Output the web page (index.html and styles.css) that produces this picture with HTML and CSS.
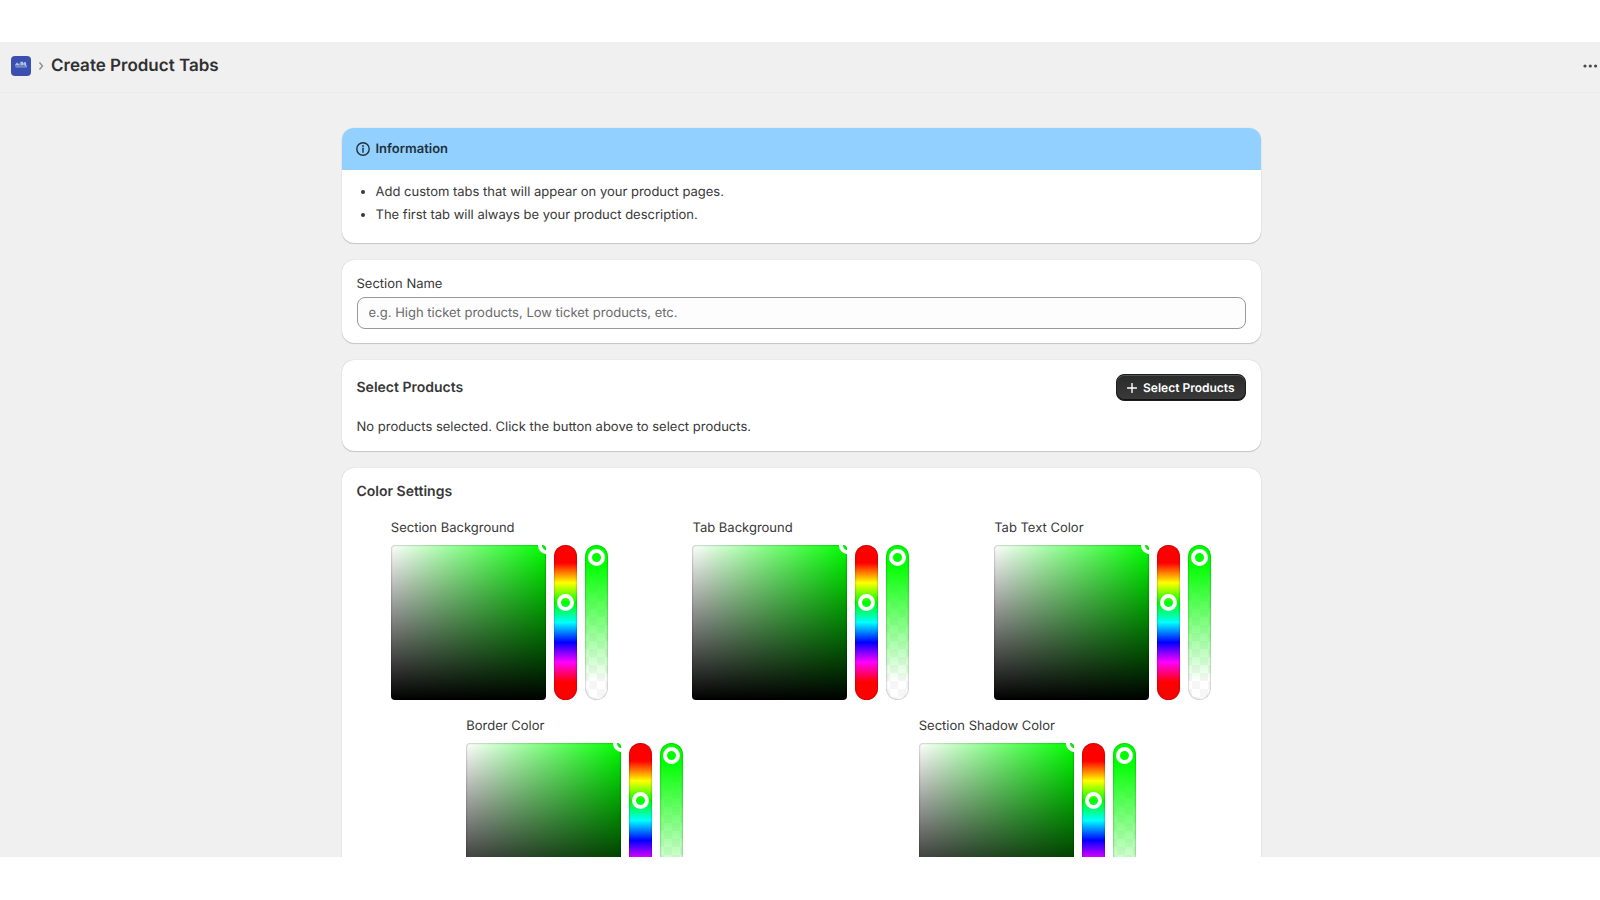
FILE: index.html
```html
<!DOCTYPE html>
<html lang="en">
<head>
<meta charset="utf-8">
<title>Create Product Tabs</title>
<link rel="stylesheet" href="styles.css">
</head>
<body>
<div class="app">
  <header class="topbar">
    <a class="logo" href="#" aria-label="App home">
      <svg viewBox="0 0 20 20" width="20" height="20" aria-hidden="true">
        <rect width="20" height="20" rx="4" fill="#3a50b0"/>
        <path d="M4.500 9.500l1.500-2 1 2M8 9.500v-2M10 9.500v-3h1.500v3M13 7h2M13.500 9.500h2M10 8h5" stroke="#b4c0ea" stroke-width="1.300" fill="none"/>
        <path d="M4.500 10.700h11.500" stroke="#7f9ac8" stroke-width="2" fill="none" opacity=".8"/>
      </svg>
    </a>
    <svg class="crumb" viewBox="0 0 6 10" width="6" height="10" aria-hidden="true"><path d="M1.500 1.500L4.500 5 1.500 8.500" fill="none" stroke="#8f8f8f" stroke-width="1.400"/></svg>
    <h1 class="title">Create Product Tabs</h1>
    <button class="more" type="button" aria-label="More actions">
      <svg viewBox="0 0 16 4" width="16" height="4" aria-hidden="true"><g fill="#4a4a4a"><circle cx="3" cy="2" r="1.600"/><circle cx="8.300" cy="2" r="1.600"/><circle cx="13.600" cy="2" r="1.600"/></g></svg>
    </button>
  </header>
  <main class="page">
    <section class="card banner">
      <div class="banner-head">
        <svg viewBox="0 0 14 14" width="14" height="14" aria-hidden="true"><circle cx="7" cy="7" r="6.200" fill="none" stroke="#22303c" stroke-width="1.400"/><path d="M7 6.300v4" stroke="#22303c" stroke-width="1.400" stroke-linecap="round"/><circle cx="7" cy="4" r=".9" fill="#22303c"/></svg>
        <h2 class="banner-title">Information</h2>
      </div>
      <ul class="tips">
        <li>Add custom tabs that will appear on your product pages.</li>
        <li>The first tab will always be your product description.</li>
      </ul>
    </section>

    <section class="card">
      <div class="field">
        <label for="name">Section Name</label>
        <input class="text" id="name" type="text" placeholder="e.g. High ticket products, Low ticket products, etc.">
      </div>
    </section>

    <section class="card products">
      <div class="row">
        <h2 class="heading">Select Products</h2>
        <button class="primary" type="button">
          <svg viewBox="0 0 10 10" width="10" height="10" aria-hidden="true"><path d="M5 .5v9M.5 5h9" stroke="#fff" stroke-width="1.400" stroke-linecap="round"/></svg>
          Select Products
        </button>
      </div>
      <p class="empty">No products selected. Click the button above to select products.</p>
    </section>

    <section class="card colors">
      <h2 class="heading">Color Settings</h2>
      <div class="pickers">
        <div class="picker" role="group" aria-labelledby="p1">
          <span id="p1">Section Background</span>
          <div class="controls">
            <div class="shade"><button class="dot" type="button" aria-label="Shade"></button></div>
            <input class="slider hue" type="range" min="0" max="360" value="124" aria-label="Hue">
            <input class="slider alpha" type="range" min="0" max="100" value="0" aria-label="Transparency">
          </div>
        </div>
        <div class="picker" role="group" aria-labelledby="p2">
          <span id="p2">Tab Background</span>
          <div class="controls">
            <div class="shade"><button class="dot" type="button" aria-label="Shade"></button></div>
            <input class="slider hue" type="range" min="0" max="360" value="124" aria-label="Hue">
            <input class="slider alpha" type="range" min="0" max="100" value="0" aria-label="Transparency">
          </div>
        </div>
        <div class="picker" role="group" aria-labelledby="p3">
          <span id="p3">Tab Text Color</span>
          <div class="controls">
            <div class="shade"><button class="dot" type="button" aria-label="Shade"></button></div>
            <input class="slider hue" type="range" min="0" max="360" value="124" aria-label="Hue">
            <input class="slider alpha" type="range" min="0" max="100" value="0" aria-label="Transparency">
          </div>
        </div>
        <div class="picker" role="group" aria-labelledby="p4">
          <span id="p4">Border Color</span>
          <div class="controls">
            <div class="shade"><button class="dot" type="button" aria-label="Shade"></button></div>
            <input class="slider hue" type="range" min="0" max="360" value="124" aria-label="Hue">
            <input class="slider alpha" type="range" min="0" max="100" value="0" aria-label="Transparency">
          </div>
        </div>
        <div class="picker" role="group" aria-labelledby="p5">
          <span id="p5">Section Shadow Color</span>
          <div class="controls">
            <div class="shade"><button class="dot" type="button" aria-label="Shade"></button></div>
            <input class="slider hue" type="range" min="0" max="360" value="124" aria-label="Hue">
            <input class="slider alpha" type="range" min="0" max="100" value="0" aria-label="Transparency">
          </div>
        </div>
      </div>
    </section>
  </main>
</div>
</body>
</html>
```
FILE: styles.css
```css
* { box-sizing: border-box; }
body {
  margin: 0;
  height: 100vh;
  padding: 42px 0 43px;
  background: #fff;
  color: #383838;
  font: 13px/20px Inter, "Liberation Sans", sans-serif;
  text-rendering: geometricPrecision;
}
h1, h2, p, ul { margin: 0; }
button, input { font: inherit; text-rendering: inherit; }
.app { height: 100%; overflow: hidden; background: #f0f0f0; }

.topbar {
  display: flex;
  align-items: center;
  gap: 7px;
  height: 51px;
  padding: 0 2px 2px 11px;
  border-bottom: 1px solid #ebebeb;
}
.logo { display: flex; }
.title { font-size: 17px; line-height: 24px; font-weight: 600; color: #303030; }
.more { margin-left: auto; padding: 4px 0; border: 0; background: none; display: flex; }

.page {
  display: flex;
  flex-direction: column;
  gap: 17px;
  max-width: 951px;
  margin: 0 auto;
  padding: 35px 15px 35px 17px;
}
.card {
  padding: 14px 15px;
  background: #fff;
  border-radius: 12px;
  box-shadow: 0 1px 1px rgba(0, 0, 0, .16), 0 0 1px rgba(0, 0, 0, .25);
}
.banner { padding: 0; overflow: hidden; }
.banner-head {
  display: flex;
  align-items: center;
  gap: 6px;
  padding: 11px 14px;
  background: #91d0ff;
}
.banner-title { font-size: 13px; line-height: 20px; font-weight: 600; color: #22303c; }
.tips {
  display: flex;
  flex-direction: column;
  gap: 3px;
  padding: 12px 15px 18px 34px;
}
.field { display: flex; flex-direction: column; gap: 3px; }
.text {
  width: 100%;
  height: 32px;
  padding: 0 11px;
  border: 1px solid #999;
  border-radius: 8px;
  background: #fdfdfd;
  color: #303030;
}
.text::placeholder { color: #6b6b6b; opacity: 1; }
.heading { font-size: 14px; line-height: 20px; font-weight: 600; }
.row { display: flex; align-items: center; justify-content: space-between; }
.products { display: flex; flex-direction: column; gap: 16px; }
.primary {
  display: flex;
  align-items: center;
  gap: 6px;
  height: 27px;
  padding: 0 10px;
  border: 1px solid #1c1c1c;
  border-radius: 8px;
  background: linear-gradient(#2a2a2a, #3a3a3a);
  box-shadow: inset 0 1px 0 #4d5550, inset 0 -1px 0 #111;
  color: #fff;
  font-size: 12px;
  font-weight: 600;
}

.colors { display: flex; flex-direction: column; gap: 16px; }
.pickers {
  display: flex;
  flex-wrap: wrap;
  justify-content: space-around;
  gap: 16px;
}
.picker { display: flex; flex-direction: column; gap: 7px; }
.controls { display: flex; gap: 8px; }
.shade {
  position: relative;
  width: 155px;
  height: 155px;
  overflow: hidden;
  border-radius: 4px;
  background:
    linear-gradient(to top, #000, transparent),
    linear-gradient(to right, #fff, transparent),
    #0f0;
  box-shadow: inset 0 0 2px rgba(0, 0, 0, .5);
}
.dot {
  position: absolute;
  top: 0;
  left: 100%;
  width: 17px;
  height: 17px;
  margin: -8px;
  padding: 0;
  border: 4px solid #fff;
  border-radius: 50%;
  background: transparent;
}
.slider {
  appearance: none;
  writing-mode: vertical-lr;
  width: 23px;
  height: 155px;
  margin: 0;
  padding: 4px 0;
  border-radius: 12px;
  box-shadow: inset 0 0 2px rgba(0, 0, 0, .5);
}
.hue {
  background: linear-gradient(#f00 18px, #ff0, #0f0, #0ff, #00f, #f0f, #f00 137px);
}
.alpha {
  background:
    linear-gradient(#0f0 18px, transparent 137px),
    repeating-conic-gradient(#f6f6f6 0 25%, #fff 0 50%) 4px 0 / 16px 16px;
}
.slider::-webkit-slider-thumb {
  appearance: none;
  width: 17px;
  height: 17px;
  border: 4px solid #fff;
  border-radius: 50%;
  background: transparent;
}
```
